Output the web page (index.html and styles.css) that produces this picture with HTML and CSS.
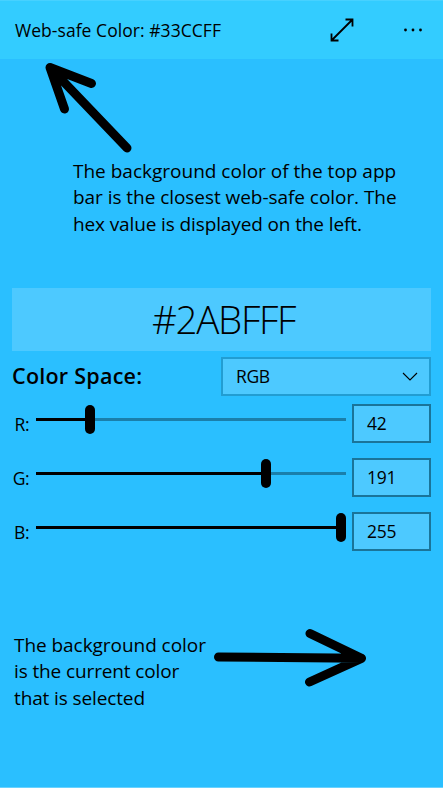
FILE: index.html
```
<!DOCTYPE html>
<html lang="en">
<head>
    <meta charset="UTF-8">
    <meta name="viewport" content="width=device-width, initial-scale=1.0">
    <title>Color Picker</title>
    <link rel="stylesheet" href="styles.css">
</head>
<body>
    <div class="app">
        <header class="app-bar">
            <span class="app-title">Web-safe Color: #33CCFF</span>
            <svg class="expand-icon" width="24" height="24" viewBox="0 0 24 24">
                <path d="M1.5 22.5L22.5 1.5M15.5 1.5H22.5V8.5M1.5 15.5V22.5H8.5"/>
            </svg>
            <svg class="more-icon" width="20" height="4" viewBox="0 0 20 4">
                <circle cx="2.5" cy="2" r="1.4"/>
                <circle cx="10" cy="2" r="1.4"/>
                <circle cx="17.5" cy="2" r="1.4"/>
            </svg>
        </header>

        <section class="callout callout-top">
            <svg class="arrow" width="100" height="98" viewBox="40 59 100 98">
                <path d="M127 148L50 67.500M64.500 109L50 67.500L91.500 83.500"/>
            </svg>
            <p class="note">
                <span class="line">The background color of the top app</span>
                <span class="line snug">bar is the closest web-safe color. The</span>
                <span class="line tight">hex value is displayed on the left.</span>
            </p>
        </section>

        <main class="picker">
            <div class="hex">#2ABFFF</div>
            <div class="space-row">
                <label class="space-label">Color Space:</label>
                <div class="select">
                    <span>RGB</span>
                    <svg class="chevron" width="16" height="9" viewBox="0 0 16 9">
                        <path d="M1 1L8 8L15 1"/>
                    </svg>
                </div>
            </div>
            <div class="channel">
                <span class="channel-label">R:</span>
                <div class="slider">
                    <div class="fill" style="width: 49px"></div>
                    <div class="thumb"></div>
                    <div class="rest"></div>
                </div>
                <div class="value">42</div>
            </div>
            <div class="channel">
                <span class="channel-label">G:</span>
                <div class="slider">
                    <div class="fill" style="width: 225px"></div>
                    <div class="thumb"></div>
                    <div class="rest"></div>
                </div>
                <div class="value">191</div>
            </div>
            <div class="channel">
                <span class="channel-label">B:</span>
                <div class="slider">
                    <div class="fill" style="width: 300px"></div>
                    <div class="thumb"></div>
                    <div class="rest"></div>
                </div>
                <div class="value">255</div>
            </div>
        </main>

        <section class="callout callout-bottom">
            <p class="note">
                <span class="line snug">The background color</span>
                <span class="line tight">is the current color</span>
                <span class="line tight">that is selected</span>
            </p>
            <svg class="arrow" width="158" height="62" viewBox="212 627 158 62">
                <path d="M218.500 657L361.500 658.300M310 633.500L361.500 658.300L309.500 682"/>
            </svg>
        </section>
    </div>
</body>
</html>
```
FILE: styles.css
```
* {
    box-sizing: border-box;
}
body {
    margin: 0;
    background-color: #2abfff;
    color: #000;
    font-family: "Open Sans", "Noto Sans", sans-serif;
    font-size: 17.5px;
}
svg {
    display: block;
    fill: none;
    stroke: #000;
    flex: none;
}
.app {
    width: 443px;
    height: 788px;
    overflow: hidden;
    border-bottom: 1px solid #69d2ff;
}
.app-bar {
    display: flex;
    align-items: center;
    height: 59px;
    padding: 0 20px 0 15px;
    background-color: #33ccff;
    border-top: 1px solid #47d1ff;
}
.app-title {
    flex: 1;
    white-space: nowrap;
    letter-spacing: 0.05px;
}
.expand-icon {
    stroke-width: 1.8;
    margin-right: 49px;
}
.more-icon {
    fill: #000;
    stroke: none;
}
.arrow {
    stroke-width: 9;
    stroke-linecap: round;
    stroke-linejoin: round;
}
.callout-top {
    height: 229px;
    padding-left: 40px;
}
.callout-top .note {
    margin: 0 0 0 33px;
    padding-top: 0.5px;
}
.note {
    margin: 0;
    font-size: 19px;
    line-height: 26.5px;
}
.line {
    display: block;
    white-space: nowrap;
}
.snug {
    letter-spacing: -0.05px;
}
.tight {
    letter-spacing: -0.12px;
}
.picker {
    padding: 0 12px;
}
.hex {
    height: 63px;
    padding-left: 4px;
    background-color: #4dc9ff;
    font-size: 38.5px;
    font-weight: 300;
    line-height: 63px;
    letter-spacing: -1.3px;
    text-align: center;
}
.space-row {
    display: flex;
    justify-content: space-between;
    margin-top: 6px;
    height: 39px;
}
.space-label {
    font-size: 21.5px;
    font-weight: 600;
    line-height: 38px;
    letter-spacing: 0.25px;
    white-space: nowrap;
}
.select {
    display: flex;
    align-items: center;
    justify-content: space-between;
    width: 210px;
    padding: 0 11px 0 13px;
    background-color: #4dc9ff;
    border: 2px solid #229dd2;
}
.select span {
    padding-bottom: 2px;
    letter-spacing: -0.4px;
}
.chevron {
    stroke-width: 1.1;
}
.channel {
    display: flex;
    height: 39px;
    margin-top: 15px;
}
.space-row + .channel {
    margin-top: 8px;
}
.channel-label {
    width: 17px;
    margin-right: 7px;
    line-height: 40px;
    display: flex;
    justify-content: flex-end;
    letter-spacing: -0.5px;
}
.slider {
    display: flex;
    align-items: center;
    width: 310px;
    height: 29px;
    margin-top: 1px;
    margin-right: 6px;
}
.fill {
    height: 3px;
    background-color: #000;
}
.thumb {
    width: 10px;
    height: 29px;
    border-radius: 5px;
    background-color: #000;
}
.rest {
    flex: 1;
    height: 3px;
    background-color: #1a7fab;
}
.value {
    width: 79px;
    padding-left: 13px;
    background-color: #4dc9ff;
    border: 2px solid #1a7499;
    line-height: 35px;
    letter-spacing: -0.2px;
}
.callout-bottom {
    display: flex;
    padding: 76px 0 0 14px;
}
.callout-bottom .note {
    width: 198px;
    padding-top: 4.5px;
}
```
